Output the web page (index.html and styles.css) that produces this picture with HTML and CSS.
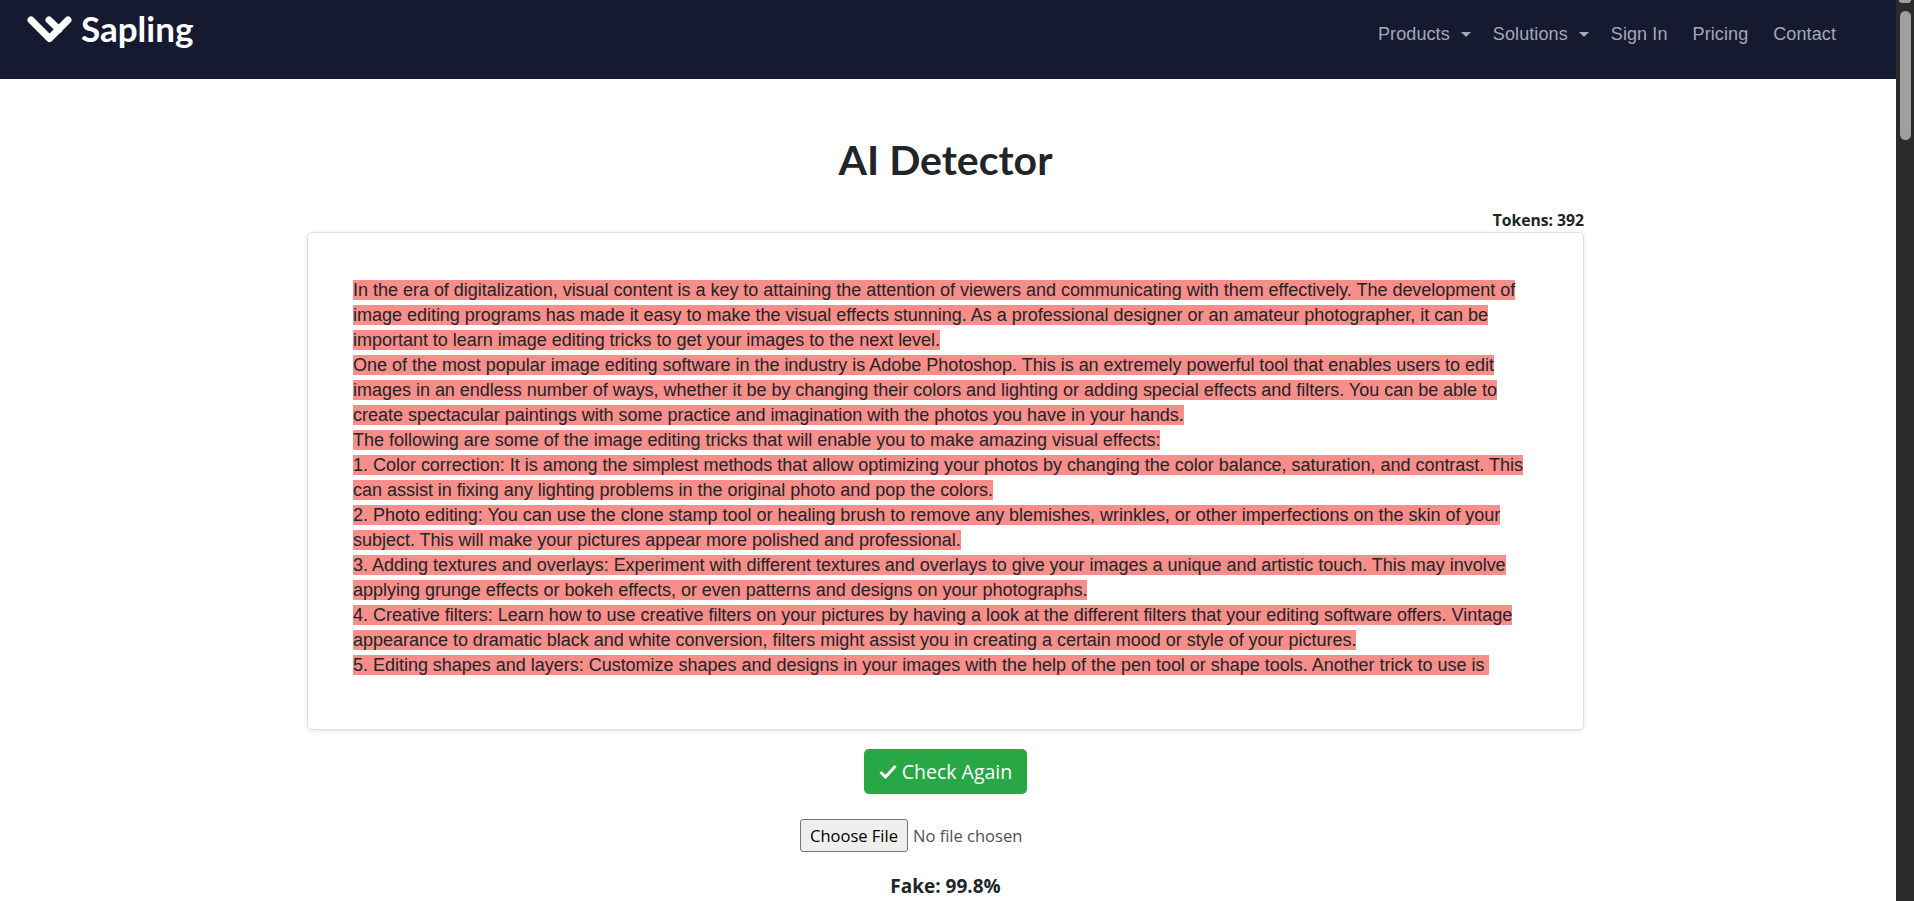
FILE: index.html
```html
<!DOCTYPE html>
<html lang="en">
<head>
<meta charset="utf-8">
<title>AI Detector</title>
<link rel="stylesheet" href="styles.css">
</head>
<body>
<div class="page">
  <main class="content">
    <nav class="navbar">
      <a class="brand" href="#">
        <svg class="logo" viewBox="0 0 48 30" width="48" height="30" aria-hidden="true">
          <path d="M5 7 L23.5 25.5 L42 7 M23 7 L33 16.5" fill="none" stroke="#fff" stroke-width="7" stroke-linecap="round" stroke-linejoin="round"/>
        </svg>
        <span class="brand-name">Sapling</span>
      </a>
      <ul class="nav-links">
        <li><a class="nav-link dropdown" href="#">Products</a></li>
        <li><a class="nav-link dropdown" href="#">Solutions</a></li>
        <li><a class="nav-link" href="#">Sign In</a></li>
        <li><a class="nav-link" href="#">Pricing</a></li>
        <li><a class="nav-link" href="#">Contact</a></li>
      </ul>
    </nav>
    <section class="detector">
      <h1 class="title">AI Detector</h1>
      <div class="tokens">Tokens: 392</div>
      <div class="editor">
        <div class="line"><span class="fake">In the era of digitalization, visual content is a key to attaining the attention of viewers and communicating with them effectively. The development of image editing programs has made it easy to make the visual effects stunning. As a professional designer or an amateur photographer, it can be important to learn image editing tricks to get your images to the next level.</span></div>
        <div class="line"><span class="fake">One of the most popular image editing software in the industry is Adobe Photoshop. This is an extremely powerful tool that enables users to edit images in an endless number of ways, whether it be by changing their colors and lighting or adding special effects and filters. You can be able to create spectacular paintings with some practice and imagination with the photos you have in your hands.</span></div>
        <div class="line"><span class="fake">The following are some of the image editing tricks that will enable you to make amazing visual effects:</span></div>
        <div class="line"><span class="fake">1. Color correction: It is among the simplest methods that allow optimizing your photos by changing the color balance, saturation, and contrast. This can assist in fixing any lighting problems in the original photo and pop the colors.</span></div>
        <div class="line"><span class="fake">2. Photo editing: You can use the clone stamp tool or healing brush to remove any blemishes, wrinkles, or other imperfections on the skin of your subject. This will make your pictures appear more polished and professional.</span></div>
        <div class="line"><span class="fake">3. Adding textures and overlays: Experiment with different textures and overlays to give your images a unique and artistic touch. This may involve applying grunge effects or bokeh effects, or even patterns and designs on your photographs.</span></div>
        <div class="line"><span class="fake">4. Creative filters: Learn how to use creative filters on your pictures by having a look at the different filters that your editing software offers. Vintage appearance to dramatic black and white conversion, filters might assist you in creating a certain mood or style of your pictures.</span></div>
        <div class="line"><span class="fake">5. Editing shapes and layers: Customize shapes and designs in your images with the help of the pen tool or shape tools. Another trick to use is&nbsp;</span></div>
      </div>
      <button class="check-btn" type="button">
        <svg class="check-icon" viewBox="0 0 18 15" width="18" height="15" aria-hidden="true"><path d="M1.5 8 L6.5 13 L16.5 2" fill="none" stroke="#fff" stroke-width="3"/></svg>
        Check Again
      </button>
      <div class="file-row">
        <button class="file-btn" type="button">Choose File</button>
        <span class="file-name">No file chosen</span>
      </div>
      <div class="score">Fake: 99.8%</div>
    </section>
  </main>
  <aside class="scrollbar" aria-hidden="true">
    <span class="scroll-arrow"></span>
    <span class="scroll-thumb"></span>
  </aside>
</div>
</body>
</html>
```

FILE: styles.css
```css
* { box-sizing: border-box; }
html, body { margin: 0; height: 100%; overflow: hidden; background: #fff; }
body { font-family: "Open Sans", "Noto Sans", sans-serif; font-size: 16px; color: #212529; }
a { text-decoration: none; }
.page { display: flex; height: 901px; }
.content { flex: 1; min-width: 0; overflow: hidden; }
.navbar { height: 79px; background: #161a30; display: flex; justify-content: space-between; align-items: flex-start; padding: 0 60px 0 26px; }
.brand { display: flex; align-items: center; gap: 7px; padding-top: 12px; color: #fff; }
.logo { display: block; }
.brand-name { font-family: Lato, sans-serif; font-weight: 700; font-size: 35px; line-height: 32px; }
.nav-links { display: flex; gap: 25px; list-style: none; margin: 0; padding: 22px 0 0; }
.nav-link { font-family: "Liberation Sans", Arial, sans-serif; font-size: 18px; line-height: 24px; letter-spacing: .1px; color: #a3a8b4; display: flex; align-items: center; }
.nav-link.dropdown::after { content: ""; margin-left: 11px; margin-right: -3px; border-top: 5px solid #a3a8b4; border-left: 5px solid transparent; border-right: 5px solid transparent; }
.detector { display: flex; flex-direction: column; align-items: center; padding: 56px 5px 0 0; }
.title { font-family: Lato, sans-serif; font-weight: 700; font-size: 41px; line-height: 50px; margin: 0; color: #212529; }
.tokens { width: 1277px; text-align: right; font-weight: 700; font-size: 15.7px; line-height: 20px; margin-top: 25px; }
.editor { width: 1277px; height: 498px; margin-top: 2px; padding: 45px 45px; border: 1px solid #dfdfdf; border-radius: 5px; box-shadow: 0 1px 4px rgba(0,0,0,.1); font-family: "Liberation Sans", Arial, sans-serif; font-size: 18px; letter-spacing: -.016px; line-height: 25px; overflow: hidden; }
.fake { background: #f88e8a; }
.check-btn { display: flex; align-items: center; gap: 5px; margin-top: 19px; height: 45px; padding: 0 15px; background: #28a745; color: #fff; border: 0; border-radius: 5px; font-family: "Open Sans", sans-serif; font-size: 19.5px; }
.file-row { display: flex; align-items: center; gap: 5px; margin-top: 25px; width: 291px; white-space: nowrap; }
.file-btn { height: 33px; width: 108px; padding: 0; background: #efefef; border: 1px solid #767676; border-radius: 3px; font-family: "Open Sans", sans-serif; font-size: 16.5px; color: #000; }
.file-name { font-size: 16.5px; color: #4d5156; }
.score { font-weight: 700; font-size: 19px; line-height: 24px; margin-top: 22px; }
.scrollbar { width: 18px; background: #2b2b2b; display: flex; flex-direction: column; padding: 11px 3px 0 4px; position: relative; }
.scroll-thumb { width: 11px; height: 129px; background: #9f9f9f; border-radius: 6px; }
.scroll-arrow { position: absolute; top: 0; left: 3px; width: 12px; height: 3px; background: #9f9f9f; border-radius: 0 0 3px 3px; }
```
